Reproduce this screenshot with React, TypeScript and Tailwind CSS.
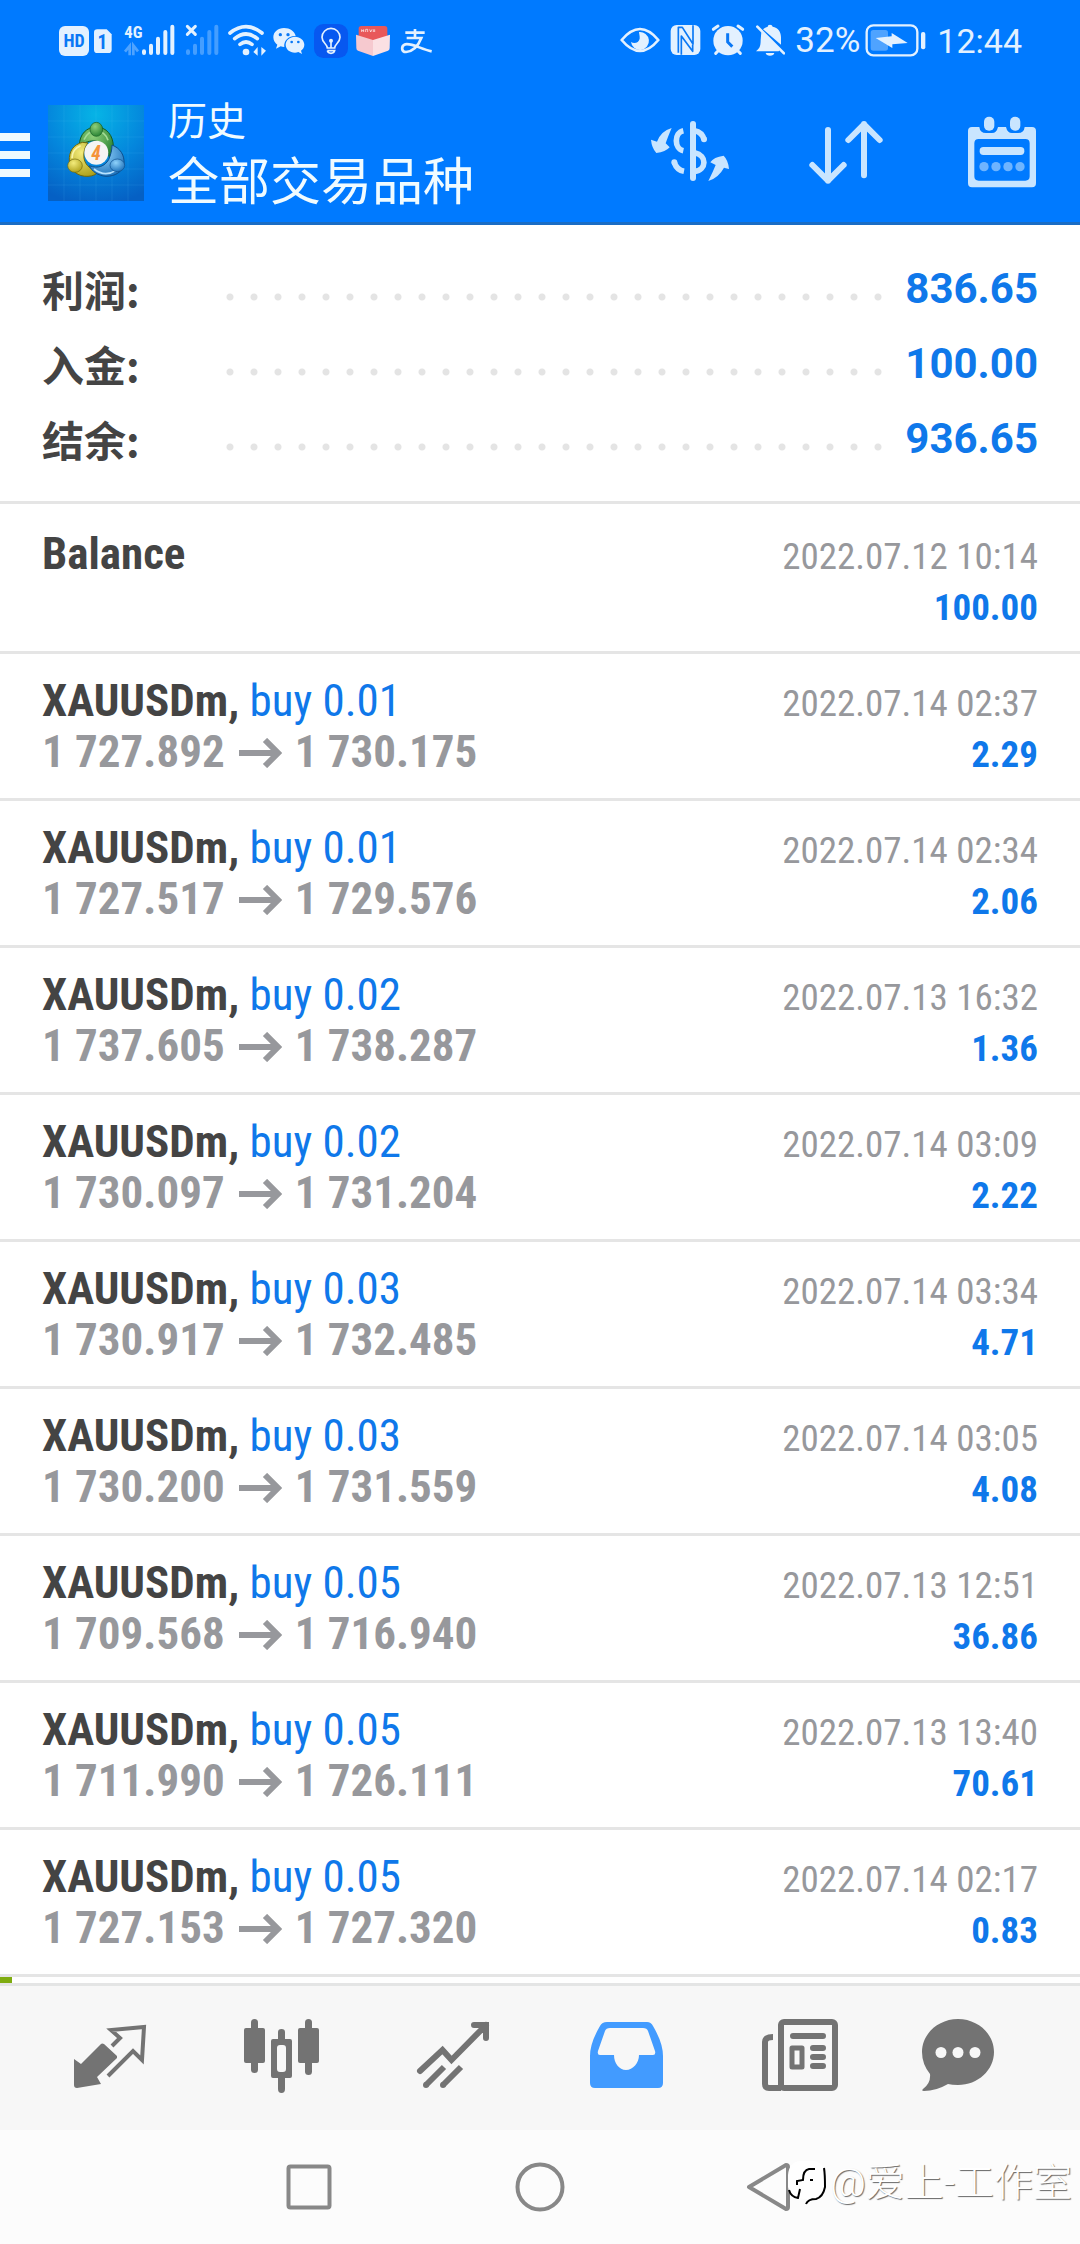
import type { ReactNode } from "react";

const summary = [
    { label: "利润:", value: "836.65" },
    { label: "入金:", value: "100.00" },
    { label: "结余:", value: "936.65" },
];

const deals = [
    { side: "buy 0.01", open: "1 727.892", close: "1 730.175", time: "2022.07.14 02:37", profit: "2.29" },
    { side: "buy 0.01", open: "1 727.517", close: "1 729.576", time: "2022.07.14 02:34", profit: "2.06" },
    { side: "buy 0.02", open: "1 737.605", close: "1 738.287", time: "2022.07.13 16:32", profit: "1.36" },
    { side: "buy 0.02", open: "1 730.097", close: "1 731.204", time: "2022.07.14 03:09", profit: "2.22" },
    { side: "buy 0.03", open: "1 730.917", close: "1 732.485", time: "2022.07.14 03:34", profit: "4.71" },
    { side: "buy 0.03", open: "1 730.200", close: "1 731.559", time: "2022.07.14 03:05", profit: "4.08" },
    { side: "buy 0.05", open: "1 709.568", close: "1 716.940", time: "2022.07.13 12:51", profit: "36.86" },
    { side: "buy 0.05", open: "1 711.990", close: "1 726.111", time: "2022.07.13 13:40", profit: "70.61" },
    { side: "buy 0.05", open: "1 727.153", close: "1 727.320", time: "2022.07.14 02:17", profit: "0.83" },
];

function StatusBar() {
    return (
        <div className="flex h-[84px] items-center justify-between pr-[58px] pb-[3px] pl-[58px] text-[#e3f1ff]">
            <div className="flex items-center gap-2">
                <div className="flex gap-[3px]">
                    <svg viewBox="54 36 96 111" className="h-[37px] w-8 overflow-visible">
                        <rect x="57" y="48" width="90" height="90" rx="18" fill="currentColor" />
                        <text x="102" y="112" fontSize="54" fontWeight="700" textAnchor="middle" fill="#0a78f5" fontFamily="Roboto Condensed">
                            HD
                        </text>
                    </svg>
                    <svg viewBox="159 36 60 111" className="h-[37px] w-5 overflow-visible">
                        <path d="M172 58h28l15 15v46q0 10-10 10h-33q-10 0-10-10V68q0-10 10-10z" fill="currentColor" />
                        <text x="187" y="116" fontSize="58" fontWeight="700" textAnchor="middle" fill="#0a78f5" fontFamily="Roboto Condensed">
                            1
                        </text>
                    </svg>
                </div>
                {/* mobile signal, 4G */}
                <svg viewBox="243 36 165 111" className="h-[37px] w-[55px] overflow-visible">
                    <text x="253" y="83" fontSize="50" fontWeight="700" fill="currentColor" fontFamily="Roboto Condensed">
                        4G
                    </text>
                    <path d="M255 125l14-17v28M280 136v-30l14 18" fill="none" stroke="currentColor" strokeWidth="8" opacity=".35" />
                    <path d="M312 124v5M333 107v22M354 86v43M376 66v63M397 50v79" stroke="currentColor" strokeWidth="12" strokeLinecap="round" />
                </svg>
                <svg viewBox="432 36 108 111" className="h-[37px] w-9 overflow-visible">
                    <path d="M442 49l24 24M466 49l-24 24" stroke="currentColor" strokeWidth="9" strokeLinecap="round" />
                    <path d="M444 124v5M465 107v22M486 86v43M508 66v63M529 50v79" stroke="currentColor" strokeWidth="12" strokeLinecap="round" opacity=".3" />
                </svg>
                {/* wifi */}
                <svg viewBox="564 36 111 111" className="h-[37px] w-[37px] overflow-visible">
                    <path d="M570 69q48-38 96 0M584 86q34-28 68 0M600 103q18-14 36 0" fill="none" stroke="currentColor" strokeWidth="11" strokeLinecap="round" />
                    <circle cx="618" cy="126" r="10" fill="currentColor" />
                    <path d="M640 126l13-15v26zM664 111v26l14-15z" fill="currentColor" />
                </svg>
                {/* wechat */}
                <svg viewBox="699 36 99 111" className="h-[37px] w-[33px] overflow-visible">
                    <path d="M732 54c-18 0-32 12-32 28 0 9 5 17 12 22l-4 12 14-7q5 2 11 2c-3-18 13-35 34-33-3-14-17-24-35-24z" fill="currentColor" />
                    <path d="M765 80c-16 0-28 11-28 24s12 24 28 24q5 0 10-2l11 6-3-10c6-4 10-11 10-18 0-13-12-24-28-24z" fill="currentColor" />
                    <g fill="#0a78f5">
                        <circle cx="721" cy="74" r="5" />
                        <circle cx="744" cy="74" r="5" />
                        <circle cx="755" cy="96" r="4" />
                        <circle cx="775" cy="96" r="4" />
                    </g>
                </svg>
                {/* bulb app */}
                <svg viewBox="822 36 102 111" className="h-[37px] w-[34px] overflow-visible">
                    <rect x="822" y="42" width="102" height="102" rx="28" fill="#0758f0" />
                    <path d="M862 114c0-12-16-16-16-32a27 27 0 0 1 54 0c0 16-16 20-16 32zM862 122h22q-2 8-11 8t-11-8M873 112v-16" fill="none" stroke="currentColor" strokeWidth="5" />
                    <circle cx="873" cy="92" r="6" fill="currentColor" />
                </svg>
                {/* red envelope in a box */}
                <svg viewBox="948 36 102 111" className="h-[37px] w-[34px] overflow-visible">
                    <rect x="956" y="48" width="86" height="50" rx="8" fill="#e8585a" />
                    <path d="M965 58v8M965 62h6M971 58v8M977 66v-8h6v8M989 58l3 8 4-8M1000 58v8M1004 66v-8" stroke="#fff" strokeWidth="2" fill="none" />
                    <path d="M948 74l51 16v48l-45-16q-5-2-5-8z" fill="#f6c9cf" />
                    <path d="M1050 74l-51 16v48l45-16q5-2 5-8z" fill="#fbe0e3" />
                </svg>
                {/* alipay */}
                <svg viewBox="1074 36 102 111" className="h-[37px] w-[34px] overflow-visible">
                    <path
                        d="M1096 68h58M1125 57v26M1100 84h44c-8 20-24 40-46 42-14 0-16-18-2-23 20-4 46 14 79 21"
                        fill="none"
                        stroke="currentColor"
                        strokeWidth="8"
                    />
                </svg>
            </div>

            <div className="flex items-center gap-[10px]">
                {/* eye comfort */}
                <svg viewBox="63 36 120 111" className="h-[37px] w-10">
                    <path d="M68 90q55-66 110 0q-55 66-110 0z" fill="none" stroke="currentColor" strokeWidth="8" strokeLinejoin="round" />
                    <path d="M120 66a27 27 0 1 1-24 30c10 6 24 2 26-10 1-8-2-15-2-20z" fill="currentColor" />
                </svg>
                {/* nfc */}
                <svg viewBox="213 36 93 111" className="h-[37px] w-[31px]">
                    <rect x="215" y="45" width="89" height="90" rx="18" fill="currentColor" />
                    <path d="M238 128V52h12l32 50V46M247 134V78l34 46V104" fill="none" stroke="#0a78f5" strokeWidth="5" strokeLinejoin="round" />
                </svg>
                {/* alarm */}
                <svg viewBox="336 36 102 111" className="h-[37px] w-[34px]">
                    <circle cx="387" cy="92" r="44" fill="currentColor" />
                    <path d="M343 58l14-10M431 58l-14-10M350 130l10-10M424 130l-10-10" stroke="currentColor" strokeWidth="9" strokeLinecap="round" />
                    <path d="M386 70v26l14 14" fill="none" stroke="#0a78f5" strokeWidth="9" />
                </svg>
                {/* muted bell */}
                <svg viewBox="468 36 90 111" className="h-[37px] w-[30px]">
                    <path d="M487 66l58 52q-6 4-6 6h-68c10-8 14-14 14-34zM492 58q6-6 14-8 0-6 7-6t8 6c16 3 25 15 25 32v22zM500 129h26q-2 8-13 8t-13-8z" fill="currentColor" />
                    <path d="M475 50l80 80" stroke="currentColor" strokeWidth="8" strokeLinecap="round" />
                </svg>
                <div className="flex items-center gap-1">
                    <span className="w-[66px] text-[35px] leading-10">32%</span>
                    <svg viewBox="792 36 186 111" className="h-[37px] w-[62px]">
                        <rect x="797" y="46" width="152" height="90" rx="20" fill="none" stroke="currentColor" strokeWidth="7" />
                        <rect x="809" y="60" width="52" height="62" rx="8" fill="currentColor" opacity=".35" />
                        <path d="M824 84l48-5v-10l48 30-46 4v11z" fill="currentColor" />
                        <rect x="960" y="66" width="13" height="52" rx="6" fill="currentColor" />
                    </svg>
                </div>
                <time className="text-[34px] leading-10">12:44</time>
            </div>
        </div>
    );
}

function AppLogo() {
    return (
        <svg viewBox="0 0 288 288" className="h-24 w-24" role="img" aria-label="MetaTrader 4">
            <defs>
                <radialGradient id="sky" cx=".5" cy=".1" r=".95">
                    <stop offset="0" stopColor="#06b4e6" />
                    <stop offset=".55" stopColor="#0485dc" />
                    <stop offset="1" stopColor="#0560c4" />
                </radialGradient>
                <radialGradient id="green" cx=".4" cy=".3" r=".8">
                    <stop offset="0" stopColor="#8fd07a" />
                    <stop offset="1" stopColor="#1d7a2c" />
                </radialGradient>
                <radialGradient id="gold" cx=".4" cy=".3" r=".8">
                    <stop offset="0" stopColor="#f3ec7c" />
                    <stop offset="1" stopColor="#a89a12" />
                </radialGradient>
                <radialGradient id="azure" cx=".4" cy=".3" r=".8">
                    <stop offset="0" stopColor="#8fd2fb" />
                    <stop offset="1" stopColor="#1268b4" />
                </radialGradient>
            </defs>
            <rect width="288" height="288" fill="url(#sky)" />
            <path
                d="M48 0v288M96 0v288M144 0v288M192 0v288M240 0v288M0 48h288M0 96h288M0 144h288M0 192h288M0 240h288"
                stroke="#6fd0ff"
                strokeOpacity=".18"
                strokeWidth="2"
            />
            <path d="M94 122c0-34 22-56 51-56s52 24 51 62c0 12-5 24-12 30-4-26-16-44-40-50-18-2-34 4-50 14z" fill="url(#green)" stroke="#145c22" strokeWidth="3" />
            <path d="M108 104c8-18 20-26 36-26s30 10 36 28" fill="none" stroke="#a5dc96" strokeWidth="5" />
            <path d="M104 112c-28 6-42 28-40 56 2 28 26 48 56 46 16 0 28-8 34-16-24-2-42-16-46-38-2-18 2-34 12-46z" fill="url(#gold)" stroke="#6f680c" strokeWidth="3" />
            <path d="M72 160c0-20 10-32 26-38" fill="none" stroke="#f8f4a8" strokeWidth="5" />
            <path d="M192 120c26 10 38 32 36 56-4 26-28 38-54 38-24-2-42-14-50-32 26 10 46 2 58-18 6-14 10-28 10-44z" fill="url(#azure)" stroke="#0d4f8e" strokeWidth="3" />
            <path d="M138 192c20 16 44 18 66 4" fill="none" stroke="#b6e2ff" strokeWidth="5" />
            <ellipse cx="145" cy="73" rx="19" ry="21" fill="url(#green)" stroke="#145c22" strokeWidth="2" />
            <ellipse cx="81" cy="182" rx="22" ry="20" fill="url(#gold)" stroke="#6f680c" strokeWidth="2" />
            <ellipse cx="208" cy="181" rx="22" ry="19" fill="url(#azure)" stroke="#0d4f8e" strokeWidth="2" />
            <circle cx="145" cy="143" r="36" fill="#f4f4f4" />
            <text x="144" y="164" fontSize="58" fontWeight="700" fontStyle="italic" textAnchor="middle" fill="#f4933a" fontFamily="Roboto Condensed">
                4
            </text>
        </svg>
    );
}

function HeaderButton({ label, viewBox, children }: { label: string; viewBox: string; children: ReactNode }) {
    return (
        <button type="button" aria-label={label} className="flex w-[156px] items-center justify-center text-[#c9e5ff]">
            <svg viewBox={viewBox} className="h-24 w-24">
                {children}
            </svg>
        </button>
    );
}

function AppBar() {
    return (
        <div className="flex h-[138px] items-center">
            <button type="button" aria-label="菜单" className="flex h-full w-12 flex-col justify-center gap-[10px] pt-1">
                <span className="h-2 w-[30px] bg-[#eefaff]" />
                <span className="h-2 w-[30px] bg-[#eefaff]" />
                <span className="h-2 w-[30px] bg-[#eefaff]" />
            </button>
            <AppLogo />
            <div className="ml-6 flex-1 pt-[2px] text-[#f0fbff]">
                <p className="text-[39px] leading-[57px]">历史</p>
                <h1 className="text-[51px] leading-[63px]">全部交易品种</h1>
            </div>
            <HeaderButton label="交易品种" viewBox="66 45 288 288">
                <path d="M219 102v162" stroke="currentColor" strokeWidth="18" strokeLinecap="round" />
                <path d="M190 122c-28 6-28 54 0 60M163 218q8 22 29 26" fill="none" stroke="currentColor" strokeWidth="17" />
                <circle cx="163" cy="217" r="9" fill="currentColor" />
                <path d="M224 122q22 4 28 26M224 188c38 8 36 52 0 56" fill="none" stroke="currentColor" strokeWidth="17" />
                <circle cx="252" cy="148" r="9" fill="currentColor" />
                <path d="M155 114q-12 28-18 46l12 12q-12 14-40 17-14-16-16-40l18 6q12-32 44-41z" fill="currentColor" />
                <path d="M265 273q14-28 22-48l-16-8q10-16 40-20 14 14 16 40l-15-4q-16 30-47 40z" fill="currentColor" />
            </HeaderButton>
            <HeaderButton label="排序" viewBox="534 45 288 288">
                <path
                    d="M624 120v152M577 225l47 47 47-47M732 256V102M685 150l47-47 47 47"
                    fill="none"
                    stroke="currentColor"
                    strokeWidth="18"
                    strokeLinecap="round"
                    strokeLinejoin="round"
                />
            </HeaderButton>
            <HeaderButton label="日期" viewBox="1002 45 288 288">
                <path
                    fillRule="evenodd"
                    d="M1056 111h22q2 18 20 18h18q14 0 18-18h24q4 18 18 18h18q18 0 20-18h22q12 0 12 12v156q0 13-12 13h-180q-12 0-12-13V123q0-12 12-12zM1076 147q-13 0-13 13v99q0 13 13 13h140q13 0 13-13v-99q0-13-13-13z"
                    fill="currentColor"
                />
                <rect x="1092" y="80" width="31" height="42" rx="15" fill="currentColor" />
                <rect x="1170" y="80" width="31" height="42" rx="15" fill="currentColor" />
                <rect x="1079" y="171" width="134" height="24" rx="11" fill="currentColor" />
                <g fill="currentColor" opacity=".55">
                    <circle cx="1092" cy="230" r="14" />
                    <circle cx="1128" cy="230" r="14" />
                    <circle cx="1164" cy="230" r="14" />
                    <circle cx="1200" cy="230" r="14" />
                </g>
            </HeaderButton>
        </div>
    );
}

function Summary() {
    return (
        <dl className="border-b-[3px] border-[#e5e5e5] px-[42px] pt-[26px] pb-[25px] text-[42px] font-bold">
            {summary.map((row) => (
                <div key={row.label} className="flex h-[75px] items-center">
                    <dt className="w-44 font-['Noto_Sans_CJK_SC',sans-serif] text-[#444]">{row.label}</dt>
                    {/* dotted leader */}
                    <dd aria-hidden className="mt-4 h-2 flex-1 bg-[radial-gradient(circle,#e4e4e4_3px,transparent_4px)] bg-[length:24px_8px]" />
                    <dd className="w-[148px] text-right text-[#0f78ea]">{row.value}</dd>
                </div>
            ))}
        </dl>
    );
}

function Arrow() {
    return (
        <svg viewBox="0 0 44 30" className="mx-[13px] inline-block h-[30px] w-11 align-[-1px]" aria-label="→">
            <path d="M1 15h38M27 2l13 13-13 13" fill="none" stroke="currentColor" strokeWidth="6" />
        </svg>
    );
}

function History() {
    return (
        <ul className="font-['Roboto_Condensed','Liberation_Sans_Narrow','Noto_Sans_CJK_SC',sans-serif] text-[45px] leading-[51px] text-[#97989c]">
            <li className="border-b-[3px] border-[#e5e5e5] px-[42px] pt-6 pb-[21px]">
                <div className="flex h-[51px] items-baseline justify-between">
                    <span className="font-bold text-[#444]">Balance</span>
                    <time className="text-[37px]">2022.07.12 10:14</time>
                </div>
                <p className="h-[51px] text-right font-bold text-[#0f78ea]">
                    <span className="text-[37px]">100.00</span>
                </p>
            </li>
            {deals.map((deal) => (
                <li key={deal.time} className="border-b-[3px] border-[#e5e5e5] px-[42px] py-[21px]">
                    <div className="flex h-[51px] items-baseline justify-between">
                        <span className="text-[#0f78ea]">
                            <b className="text-[#444]">XAUUSDm,</b> {deal.side}
                        </span>
                        <time className="text-[37px]">{deal.time}</time>
                    </div>
                    <div className="flex h-[51px] items-baseline justify-between font-bold">
                        <span>
                            {deal.open}
                            <Arrow />
                            {deal.close}
                        </span>
                        <span className="text-[37px] text-[#0f78ea]">{deal.profit}</span>
                    </div>
                </li>
            ))}
        </ul>
    );
}

function Tab({ label, active, children }: { label: string; active?: boolean; children: ReactNode }) {
    return (
        <button
            type="button"
            aria-label={label}
            className={active ? "flex flex-1 items-center justify-center text-[#429bff]" : "flex flex-1 items-center justify-center text-[#737373]"}
        >
            <svg viewBox="0 0 96 96" className="h-24 w-24">
                {children}
            </svg>
        </button>
    );
}

function TabBar() {
    return (
        <nav className="flex h-[147px] border-t-[3px] border-[#e4e5e5] bg-[#f7f7f7] px-6">
            <Tab label="行情">
                <path d="M12 49l7 5 20-20q1-1 3 0l13 12v2L35 67l4 7-24 4q-3 0-3-3z" fill="currentColor" />
                <path d="M50 36l8-8-9-8 33-3-2 33-9-9-25 25" fill="none" stroke="currentColor" strokeWidth="4" />
            </Tab>
            <Tab label="图表">
                <g fill="currentColor">
                    <rect x="10" y="18" width="21" height="35" rx="2" />
                    <rect x="17" y="9" width="7" height="54" rx="3.5" />
                    <path fillRule="evenodd" d="M39 29h17q2 0 2 2v35q0 2-2 2H39q-2 0-2-2V31q0-2 2-2zM46 35q-3 0-3 3v21q0 3 3 3h3q3 0 3-3V38q0-3-3-3z" />
                    <path d="M44 30v-8q0-3 3.500-3t3.500 3v8zM44 67v12q0 4 3.500 4t3.500-4V67z" />
                    <rect x="64" y="18" width="21" height="35" rx="2" />
                    <rect x="71" y="9" width="7" height="56" rx="3.500" />
                </g>
            </Tab>
            <Tab label="交易">
                <path d="M14 61l22.500-21 9 10L80 15M68 15h12v13" fill="none" stroke="currentColor" strokeWidth="6" strokeLinecap="round" strokeLinejoin="miter" />
                <path d="M20 75l18-18M37 75l18-18" stroke="currentColor" strokeWidth="6" />
                <circle cx="20" cy="75" r="3" fill="currentColor" />
                <circle cx="37" cy="75" r="3" fill="currentColor" />
            </Tab>
            <Tab label="历史" active>
                <path
                    fillRule="evenodd"
                    d="M29 12h40q4 0 6 4 10 17 10 30v27q0 5-5 5H17q-5 0-5-5V46q0-13 10-30 2-4 7-4zM32 18q-4 0-5 3l-7 20q-1 4 2 4h14c0 8 5 15 12 15s13-7 13-15h14q3 0 2-4l-7-20q-1-3-5-3z"
                    fill="currentColor"
                />
            </Tab>
            <Tab label="新闻">
                <rect x="31" y="12" width="54" height="66" rx="3" fill="none" stroke="currentColor" strokeWidth="6" />
                <path d="M23 27q-8 0-8 5v42q0 4 4 4h12" fill="none" stroke="currentColor" strokeWidth="6" />
                <path d="M43 26h30M63 38h10M63 47h10M63 56h10" stroke="currentColor" strokeWidth="6" strokeLinecap="round" />
                <rect x="42" y="38" width="10" height="19" fill="none" stroke="currentColor" strokeWidth="5" strokeLinejoin="round" />
            </Tab>
            <Tab label="消息">
                <path d="M36 9c20 0 36 15 36 33S56 75 36 75q-6 0-10-1-12 7-24 7-3 0-1-2 8-6 7-15Q0 54 0 42C0 24 16 9 36 9z" fill="currentColor" />
                <g fill="#f7f7f7">
                    <circle cx="19" cy="42.500" r="5.500" />
                    <circle cx="36" cy="42.500" r="5.500" />
                    <circle cx="53" cy="42.500" r="5.500" />
                </g>
            </Tab>
        </nav>
    );
}

function SystemNav() {
    return (
        <div className="relative flex h-[114px] items-center justify-center bg-[#fcfcfc] text-[#888]">
            <button type="button" aria-label="最近任务" className="flex w-[231px] justify-center">
                <svg viewBox="0 0 54 54" className="h-[54px] w-[54px]" fill="none" stroke="currentColor" strokeWidth="4">
                    <rect x="6.500" y="6.500" width="41" height="41" rx="2" />
                </svg>
            </button>
            <button type="button" aria-label="主页" className="flex w-[231px] justify-center">
                <svg viewBox="0 0 54 54" className="h-[54px] w-[54px]" fill="none" stroke="currentColor" strokeWidth="4">
                    <circle cx="27" cy="27" r="22.500" />
                </svg>
            </button>
            <button type="button" aria-label="返回" className="flex w-[231px] justify-center">
                <svg viewBox="0 0 54 54" className="h-[54px] w-[54px]" fill="none" stroke="currentColor" strokeWidth="4" strokeLinejoin="round">
                    <path d="M5 27L42 5q2 0 2 2v40q0 2-2 2z" />
                </svg>
            </button>

            {/* uploader watermark */}
            <div className="absolute right-2 bottom-9 flex items-center gap-1 text-white">
                <svg viewBox="0 0 38 48" className="h-12 w-[38px]">
                    <path d="M12 2h14q11 2 11 14v12q0 11-8 12l-10 5v-5Q1 40 0 28V16Q1 3 12 2z" fill="#fff" />
                    <path
                        d="M36 9q1 6 1 19-2 10-9 12-8 0-10 5M27 10h-6q-6 1-6 11l-6 1v4M22 21h3M1 31q2 7 9 8l2-9"
                        fill="none"
                        stroke="#000"
                        strokeWidth="2"
                    />
                </svg>
                <span className="text-[39px] leading-[50px] font-light [text-shadow:1px_1px_1px_#0009]">@爱上-工作室</span>
            </div>
        </div>
    );
}

export default function App() {
    return (
        <div className="min-h-screen w-full bg-white font-['Roboto','Noto_Sans_CJK_SC',sans-serif]">
            <header className="border-b-[3px] border-[#1a6dc4] bg-[#007aff]">
                <StatusBar />
                <AppBar />
            </header>
            <main>
                <Summary />
                <History />
            </main>
            <div className="h-[6px]">
                <div className="h-full w-3 bg-[#7fac10]" />
            </div>
            <TabBar />
            <SystemNav />
        </div>
    );
}
